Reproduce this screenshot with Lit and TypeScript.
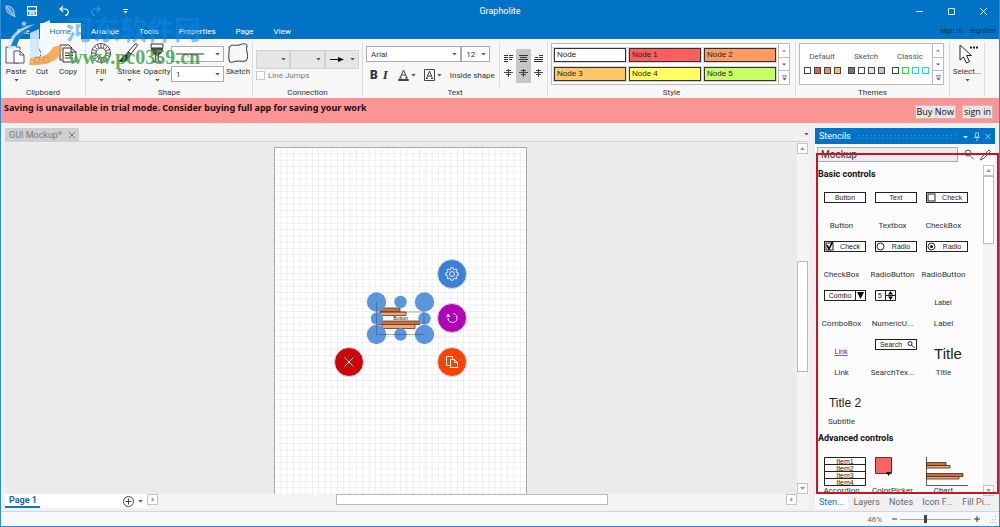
import { LitElement, html, svg, css, nothing, TemplateResult } from "lit";
import { customElement, property } from "lit/decorators.js";
import { styleMap } from "lit/directives/style-map.js";

const base = css`
  * { box-sizing: border-box; }
  button, select, input { font: inherit; color: inherit; margin: 0; padding: 0; border-radius: 0; }
  button { background: none; border: 0; display: block; }
  select { appearance: none; background: none; border: 1px solid #ababab; }
  svg { display: block; }
`;

const arrow = html`<svg width="5" height="3" viewBox="0 0 5 3"><path d="M0.3 0h4.4L2.5 2.6z" fill="#555" /></svg>`;

@customElement("gallery-steps")
class GallerySteps extends LitElement {
  static styles = [base, css`
    :host { display: flex; flex-direction: column; width: 11px; border-left: 1px solid #bbb; }
    button { flex: 1; display: flex; align-items: center; justify-content: center; border-bottom: 1px solid #bbb; }
    button:last-child { border-bottom: 0; }
  `];
  render() {
    return html`
      <button aria-label="Scroll up"><svg width="4" height="3" viewBox="0 0 4 3"><path d="M0 2.5h4L2 .5z" fill="#888" /></svg></button>
      <button aria-label="Scroll down"><svg width="4" height="3" viewBox="0 0 4 3"><path d="M0 .5h4L2 2.5z" fill="#555" /></svg></button>
      <button aria-label="Show all"><svg width="5" height="6" viewBox="0 0 5 6"><path d="M0 .5h5M0 2h5" stroke="#777" stroke-width=".7" /><path d="M.5 3.2h4l-2 2.3z" fill="#555" /></svg></button>
    `;
  }
}

@customElement("combo-field")
class ComboField extends LitElement {
  @property() label = "";
  @property() value = "";
  static styles = [base, css`
    :host { display: grid; font-size: 8px; height: 16px; align-items: center; }
    select, svg { grid-area: 1 / 1; }
    select { width: 100%; height: 100%; padding-left: 4px; background: var(--field, #fff); border-color: var(--edge, #ababab); }
    svg { justify-self: end; margin-right: 4px; pointer-events: none; z-index: 1; }
    slot { display: contents; }
    ::slotted(svg) { grid-area: 1 / 1; pointer-events: none; z-index: 1; margin-left: 5px; }
  `];
  render() {
    return html`<select aria-label=${this.label}><option>${this.value}</option></select><slot></slot>${arrow}`;
  }
}

const big = (name: string, pic: TemplateResult, drop: boolean) => html`
  <button class="big"><svg width="22" height="22" viewBox="0 0 22 22" fill="none" stroke="#333" stroke-width="1">${pic}</svg>
    <span>${name}</span>${drop ? arrow : nothing}</button>`;

const pastePic = svg`<path d="M6 4H1v16h13v-3M6 4V2h5v2h4v3" stroke="#555"/><path d="M9 8h6l4 4v8H9z" fill="#fff" stroke="#555"/><path d="M15 8v4h4" stroke="#555"/>`;
const cutPic = svg`<path d="M5 1l8 14M16 1L8 15" stroke="#666"/><circle cx="6" cy="17" r="3" stroke="#666"/><circle cx="15" cy="17" r="3" stroke="#666"/>`;
const copyPic = svg`<path d="M5 17H3V2h9l3 3"/><path d="M6 5h8l5 4v10H6z" fill="#fff"/><path d="M14 5v4h5M8 10h8M8 12.5h8M8 15h8"/>`;
const fillPic = svg`<g stroke-width=".8"><circle cx="11" cy="10" r="9.500"/><circle cx="11" cy="10" r="5"/><path d="M11 .5v4.500M11 15v4.500M1.500 10H6M16 10h4.500M4.300 3.300l3.200 3.200M14.500 13.500l3.200 3.200M17.700 3.300l-3.200 3.200M7.500 13.500l-3.200 3.200"/><path d="M7.400 1.200l1.700 4.100M14.600 1.200l-1.700 4.100M2.200 6.400l4.200 1.700M19.800 6.400l-4.200 1.700M2.200 13.600l4.200-1.700M19.800 13.600l-4.200-1.700M7.400 18.800l1.700-4.100M14.600 18.800l-1.700-4.100"/></g>`;
const strokePic = svg`<path d="M10 9l7-8c2-1 3 1 2 2l-6 8z"/><path d="M10 9l3 2-2 3-3-2z" fill="#777"/><path d="M8 12c-4 0-3 4-7 6 5 2 9 0 10-4z" fill="#333"/>`;
const opacityPic = svg`<path d="M5 1h12c0 3-.5 5-1 7-1 3-3 4-5 4s-4-1-5-4C5.500 6 5 4 5 1z"/><path d="M6 5h10c0 4-2 6-5 6S6 9 6 5z" fill="#555"/><path d="M9.500 12l.5 5-3 2h8l-3-2 .5-5"/>`;
const sketchPic = svg`<path d="M2 4C5 1 8 3 12 2c3-1 6-2 8 0 0 3-1 4 0 7 1 4 1 6-1 9-5 1-9-1-13 1-3 1-4 0-4-3C1 11 3 8 2 4z"/>`;

@customElement("ribbon-bar")
class RibbonBar extends LitElement {
  static styles = [base, css`
    :host { display: grid; height: 59px; background: #f7f7f7; font-size: 8px; color: #333; padding-top: 3px;
      grid-template-columns: minmax(0, 85fr) minmax(0, 167fr) minmax(0, 110fr) minmax(0, 185fr) minmax(0, 248fr) minmax(0, 154fr) minmax(0, 35fr) minmax(0, 14fr); }
    .group { display: flex; flex-direction: column; border-right: 1px solid #dcdcdc; margin-bottom: 2px; min-width: 0; }
    .last { border: 0; }
    .body { flex: 1; display: flex; min-height: 0; }
    .clip { padding-left: 2px; }
    .name { text-align: center; line-height: 12px; margin-bottom: -3px; }
    .big { display: flex; flex-direction: column; align-items: center; padding-top: 1px; width: 26px; }
    .big span { line-height: 10px; margin: 2px 0; white-space: nowrap; }
    .shape .big { width: 28px; }
    .shape { padding-left: 1px; }
    .select { justify-content: center; }
    .stack { display: flex; flex-direction: column; gap: 4px; padding-top: 4px; flex: 1; }
    .conn { padding: 8px 3px 0; flex: 1; }
    .trio { display: grid; grid-template-columns: repeat(3, 1fr); height: 19px; }
    .trio combo-field { height: 19px; --field: #e6e6e6; --edge: #d2d2d2; }
    label { display: flex; align-items: center; gap: 3px; color: #777; margin-top: 2px; }
    input[type="checkbox"] { appearance: none; width: 9px; height: 9px; border: 1px solid #c8c8c8; background: #fff; }
    .fonts { display: grid; grid-template-columns: 94fr 28fr; }
    .text { flex: 133 0 0; padding: 4px 9px 0 3px; min-width: 0; }
    .marks { display: flex; align-items: center; height: 20px; margin-top: 3px; padding-left: 4px; gap: 5px; white-space: nowrap; }
    .marks .b { font-weight: 900; font-size: 12px; width: 10px; }
    .marks .i { font: italic 700 13px "Liberation Serif", serif; width: 10px; }
    .marks .color { display: flex; align-items: center; gap: 2px; }
    .marks .color + .color { margin: 0 3px; }
    .sep { width: 1px; height: 15px; background: #dcdcdc; }
    .align { flex: 51 0 0; border-left: 1px solid #dcdcdc; display: grid; grid-template-columns: repeat(3, 15px); justify-content: center; padding: 7px 0 4px; }
    .align div { display: flex; flex-direction: column; justify-content: space-evenly; align-items: center; }
    .align .on { background: #c6c6c6; }
    .gallery { flex: 1; display: flex; border: 1px solid #bbb; background: #fff; height: 42px; margin: 1px 5px 0 3px; }
    .nodes { flex: 1; display: grid; grid-template-columns: repeat(3, 1fr); gap: 4px 3px; padding: 3px 2px 2px; }
    .node { border: 1px solid #333; outline: 1px solid rgba(120, 120, 120, .3); text-align: left; padding-left: 2px;
      font: 8px/12px "Liberation Sans", Arial, sans-serif; color: #222; height: 14px; align-self: center; }
    .themes { flex: 1; display: grid; grid-template-columns: repeat(3, 1fr); }
    .theme { display: flex; flex-direction: column; align-items: center; padding-top: 7px; gap: 4px; line-height: 12px; color: #555; }
    .theme div { display: flex; gap: 3px; }
    .theme i { width: 7px; height: 7px; border: 1px solid #444; }
  `];
  render() {
    const bars = (kind: number) => html`<button aria-label="Alignment"><svg width="9" height="8" viewBox="0 0 9 8" stroke="#333">
      ${kind === 0 ? svg`<path d="M0 .5h4M0 2.500h4M0 4.500h4M0 6.500h4M5 .5h4M5 2.500h4M5 4.500h3"/>`
        : kind === 1 ? svg`<path d="M0 .5h9M1 2.500h7M0 4.500h9M1 6.500h7"/>`
        : kind === 2 ? svg`<path d="M5 .5h4M5 2.500h4M0 4.500h9M0 6.500h9M1 2.500h3"/>`
        : svg`<path d="M0 3.500h9M2 1.500h5M2 5.500h5M4.500 0v8" stroke-width=".9"/>`}</svg></button>`;
    const nodes: [string, string][] = [["Node", "#fff"], ["Node 1", "#fb5e5e"], ["Node 2", "#ff9a62"], ["Node 3", "#ffc766"], ["Node 4", "#ffff62"], ["Node 5", "#c8ff62"]];
    const themes: [string, string[], string[]][] = [
      ["Default", ["#fff", "#f55", "#ff8a50", "#ffc055"], []],
      ["Sketch", ["#777", "#fff", "#e4e4e4", "#c8c8c8"], []],
      ["Classic", ["#fff", "#fff", "#fff", "#fff"], ["#444444", "#3fd24a", "#3fd6b4", "#35d5e0"]],
    ];
    return html`
      <div class="group"><div class="body clip">
        ${big("Paste", pastePic, true)}${big("Cut", cutPic, false)}${big("Copy", copyPic, false)}
      </div><div class="name">Clipboard</div></div>
      <div class="group"><div class="body shape">
        ${big("Fill", fillPic, true)}${big("Stroke", strokePic, true)}${big("Opacity", opacityPic, true)}
        <div class="stack">
          <combo-field label="Line style"><svg width="28" height="2"><path d="M0 1h28" stroke="#333" /></svg></combo-field>
          <combo-field label="Line width" value="1"></combo-field>
        </div>
        ${big("Sketch", sketchPic, false)}
      </div><div class="name">Shape</div></div>
      <div class="group"><div class="body"><div class="conn">
        <div class="trio"><combo-field label="Route"></combo-field><combo-field label="Start cap"></combo-field>
          <combo-field label="End cap"><svg width="14" height="5" viewBox="0 0 14 5"><path d="M0 2.500h9" stroke="#111" /><path d="M8 0l6 2.500L8 5z" fill="#111" /></svg></combo-field></div>
        <label><input type="checkbox" />Line Jumps</label>
      </div></div><div class="name">Connection</div></div>
      <div class="group"><div class="body">
        <div class="text">
          <div class="fonts"><combo-field label="Font" value="Arial"></combo-field><combo-field label="Size" value="12"></combo-field></div>
          <div class="marks"><button class="b">B</button><button class="i">I</button><span class="sep"></span>
            <button class="color" aria-label="Text colour"><svg width="11" height="12" viewBox="0 0 11 12" fill="none" stroke="#444"><path d="M2 9L5.500 1 9 9M3.200 6h4.600M1 9h3M7 9h3"/><path d="M.5 10.500h10v1H.5z"/></svg>${arrow}</button>
            <button class="color" aria-label="Background colour"><svg width="11" height="12" viewBox="0 0 11 12" fill="none" stroke="#444"><path d="M.5 .5h10v11H.5z"/><path d="M2.500 9.500L5.500 2l3 7.500M3.500 7h4M2 9.500h2M7 9.500h2"/></svg>${arrow}</button>
            <button>Inside shape</button></div>
        </div>
        <div class="align"><div>${bars(0)}${bars(3)}</div><div class="on">${bars(1)}${bars(3)}</div><div>${bars(2)}${bars(3)}</div></div>
      </div><div class="name">Text</div></div>
      <div class="group"><div class="body"><div class="gallery"><div class="nodes">
        ${nodes.map(([n, c]) => html`<button class="node" style=${styleMap({ background: c })}>${n}</button>`)}
      </div><gallery-steps></gallery-steps></div></div><div class="name">Style</div></div>
      <div class="group"><div class="body"><div class="gallery"><div class="themes">
        ${themes.map(([n, f, b]) => html`<button class="theme">${n}<div>${f.map((c, k) => html`<i style=${styleMap({ "background": c, "border-color": b[k] ?? "#444" })}></i>`)}</div></button>`)}
      </div><gallery-steps></gallery-steps></div></div><div class="name">Themes</div></div>
      <div class="group"><div class="body select">${big("Select...", svg`<path d="M4 2v15l3.500-3 3 6 3-1.500-3-6h5z" fill="#fff" stroke="#222"/><path d="M14 4.500h8" stroke="#222" stroke-width="2" stroke-dasharray="2 1"/>`, true)}</div></div>
      <div class="group last"></div>
    `;
  }
}

type Stencil = [string, TemplateResult];
const box = svg`<rect x=".5" y=".5" width="41" height="10" fill="#fff" stroke="#222"/>`;
const mid = (s: string, x = 21) => svg`<text x=${x} y="8" text-anchor="middle">${s}</text>`;
const basic: Stencil[] = [
  ["Button", svg`${box}${mid("Button")}`],
  ["Textbox", svg`${box}${mid("Text")}`],
  ["CheckBox", svg`${box}<rect x="2" y="2" width="7" height="7" fill="none" stroke="#222"/>${mid("Check", 26)}`],
  ["CheckBox", svg`${box}<rect x="2" y="2" width="7" height="7" fill="none" stroke="#222"/><path d="M3 4l2 4 4-8" fill="none" stroke="#000" stroke-width="1.600"/>${mid("Check", 26)}`],
  ["RadioButton", svg`${box}<circle cx="5.500" cy="5.500" r="3.500" fill="none" stroke="#222"/>${mid("Radio", 26)}`],
  ["RadioButton", svg`${box}<circle cx="5.500" cy="5.500" r="3.500" fill="none" stroke="#222"/><circle cx="5.500" cy="5.500" r="1.500" fill="#111"/>${mid("Radio", 26)}`],
  ["ComboBox", svg`${box}<path d="M31.500 0v11" stroke="#222"/><path d="M33 2h7l-3.500 7z" fill="#000"/>${mid("Combo", 16)}`],
  ["NumericU...", svg`<path d="M.5 .5h20v10H.5zM10.500 0v11M10.500 5.500h10" fill="#fff" stroke="#222"/><path d="M13 4.500h5l-2.500-3.500zM13 6.500h5l-2.500 3.500z" fill="#000"/>${mid("5", 5)}`],
  ["Label", svg`<text x="17" y="15" text-anchor="middle">Label</text>`],
  ["Link", svg`<text x="17" y="15" text-anchor="middle" fill="#22c" text-decoration="underline">Link</text>`],
  ["SearchTex...", svg`${box}${mid("Search", 16)}<circle cx="35" cy="4.500" r="2" fill="none" stroke="#222"/><path d="M36.500 6l3 3" stroke="#222"/>`],
  ["Title", svg`<text x="22" y="20" text-anchor="middle" class="title">Title</text>`],
  ["Subtitle", svg`<text x="21" y="19" text-anchor="middle" class="sub">Title 2</text>`],
];
const chart = svg`<path d="M0 5.500h20v3H0zM0 16.500h37v3H0z" fill="#c4714a" stroke="#4a2a1a" stroke-width=".8"/><path d="M0 8.500h24v2.500H0zM0 19.500h33v2.500H0z" fill="#f9a070" stroke="#4a2a1a" stroke-width=".8"/><path d="M.5 0v28.500H42" fill="none" stroke="#333" stroke-width=".8"/>`;
const advanced: Stencil[] = [
  ["Accordion", svg`<path d="M.5 .5h41v28H.5zM.5 7.500h41M.5 14.500h41M.5 21.500h41" fill="#fff" stroke="#222"/>${[1, 2, 3, 4].map((n) => svg`<text x="21" y=${n * 7} text-anchor="middle">Item${n}</text>`)}`],
  ["ColorPicker", svg`<path d="M.5 .5h16v16H.5z" fill="#fb6262" stroke="#533"/><path d="M11 15h5l-2.500 4z" fill="#000"/>`],
  ["Chart", chart],
];

@customElement("stencil-panel")
class StencilPanel extends LitElement {
  static styles = [base, css`
    :host { display: flex; flex-direction: column; background: #fcfcfc; font-size: 8px; color: #333; min-height: 0; }
    .head { display: flex; align-items: center; gap: 6px; height: 16px; background: #0173c7; color: #fff; padding: 0 4px; font-size: 9px; flex: none; }
    .dots { flex: 1; height: 5px; background: radial-gradient(circle, #2f8bd4 1px, transparent 1px) 0 0 / 4px 3px; }
    .find { display: flex; align-items: center; height: 21px; padding: 0 4px 0 2px; gap: 6px; flex: none; }
    .find select { flex: 1; height: 15px; background: #ededed; font-size: 10px; line-height: 13px; padding-left: 3px; }
    .main { flex: 1; display: flex; min-height: 0; }
    .list { flex: 1; overflow: hidden; padding-left: 1px; }
    h2 { margin: 0; font-size: 9px; line-height: 18px; color: #111; padding-left: 2px; font-weight: 700; }
    .grid { display: grid; grid-template-columns: repeat(3, 51px); grid-auto-rows: 49px; }
    .grid + h2 { line-height: 20px; }
    .item { display: flex; flex-direction: column; padding-top: 9px; line-height: 10px; }
    .item > svg { margin-left: 8px; }
    .item text { font: 7px "Liberation Sans", Arial, sans-serif; }
    .item .title { font-size: 15px; }
    .item .sub { font-size: 12px; }
    .tabs { display: flex; height: 13px; background: #f0f0f0; align-items: center; justify-content: space-between; font-size: 9px; flex: none; color: #666; }
    .tabs button { line-height: 13px; padding: 0 4px; white-space: nowrap; }
    .tabs .on { background: #fcfcfc; color: #0173c7; }
  `];
  render() {
    const cell = ([name, pic]: Stencil) => html`<button class="item"><svg width="42" height="29" viewBox="0 0 42 29" fill="#222">${pic}</svg><span>${name}</span></button>`;
    return html`
      <div class="head"><span>Stencils</span><span class="dots"></span>
        <svg width="28" height="9" viewBox="0 0 28 9" fill="none" stroke="#9cc8ec"><path d="M0 4h5L2.500 6.500z" fill="#d5e9f8" stroke="none"/><path d="M12.500 1h3v4h-3zM11 5.500h6M14 5.500V9"/><path d="M22.500 2l5 5M27.500 2l-5 5"/></svg></div>
      <div class="find"><select aria-label="Stencil set"><option>Mockup</option></select>
        <button aria-label="Search"><svg width="10" height="12" viewBox="0 0 10 12" fill="none" stroke="#555"><circle cx="4" cy="4" r="3"/><path d="M6 6.500l4 4"/></svg></button>
        <button aria-label="Edit"><svg width="11" height="12" viewBox="0 0 11 12" fill="none" stroke="#555"><path d="M2 8l7-7 1.500 1.500-7 7L0 11z"/></svg></button></div>
      <div class="main"><div class="list">
        <h2>Basic controls</h2><div class="grid">${basic.map(cell)}</div>
        <h2>Advanced controls</h2><div class="grid">${advanced.map(cell)}</div>
      </div><scroll-strip lead="0" size="64" rest="234"></scroll-strip></div>
      <div class="tabs"><button class="on">Sten...</button><button>Layers</button><button>Notes</button><button>Icon F...</button><button>Fill Pi...</button></div>
    `;
  }
}

@customElement("scroll-strip")
class ScrollStrip extends LitElement {
  @property({ type: Number }) lead = 0;
  @property({ type: Number }) size = 1;
  @property({ type: Number }) rest = 1;
  @property({ type: Boolean, reflect: true }) flat = false;
  static styles = [base, css`
    :host { display: flex; flex-direction: column; width: 12px; background: #f4f4f4; padding-right: 1px; }
    :host([flat]) { flex-direction: row; width: auto; height: 13px; padding: 0 0 2px; }
    button { flex: none; width: 11px; height: 11px; background: #fff; border: 1px solid #c4c4c4; display: grid; place-items: center; }
    .thumb { background: #fff; border: 1px solid #b8b8b8; }
  `];
  render() {
    const tip = (d: string) => html`<svg width="5" height="5" viewBox="0 0 5 5"><path d=${d} fill="#999" /></svg>`;
    return html`<button aria-label="Back">${tip(this.flat ? "M3.500 0v5L1 2.500z" : "M0 4h5L2.500 1z")}</button>
      <span style=${styleMap({ flex: `${this.lead} 0 0` })}></span><span class="thumb" style=${styleMap({ flex: `${this.size} 0 0` })}></span><span style=${styleMap({ flex: `${this.rest} 0 0` })}></span>
      <button aria-label="Forward">${tip(this.flat ? "M1.500 0v5L4 2.500z" : "M0 1h5L2.500 4z")}</button>`;
  }
}

@customElement("drawing-board")
class DrawingBoard extends LitElement {
  static styles = [base, css`
    :host { display: flex; flex-direction: column; min-width: 0; font-size: 9px; }
    .tabs { display: flex; height: 19px; padding-top: 5px; align-items: center; justify-content: space-between; border-bottom: 1px solid #d0d0d0; flex: none; }
    .doc { display: flex; align-items: center; gap: 7px; height: 14px; background: #cfcfcf; color: #7c7c7c; padding: 0 4px; }
    .view { flex: 1; display: flex; min-height: 0; margin-top: 1px; }
    .canvas { flex: 1; background: #ebebeb; display: flex; justify-content: center; padding: 4px 2px 0 0; }
    .page { width: 253px; position: relative; background: #fff; border: 1px solid #a8a8a8; border-bottom: 0; overflow: hidden; }
    .chart { position: absolute; left: 90px; top: 142px; }
    .act { position: absolute; width: 30px; height: 30px; border-radius: 50%; border: 1px solid #c9d9ee; display: grid; place-items: center; }
    .gear { left: 162px; top: 111px; background: #3d7fd4; }
    .turn { left: 162px; top: 155px; background: #b100b8; }
    .dup { left: 162px; top: 199px; background: #ff4200; }
    .del { left: 59px; top: 199px; background: #cc0505; }
    .foot { display: flex; height: 15px; padding-right: 12px; align-items: flex-start; margin-bottom: 4px; background: #f4f4f4; }
    .pages { width: 142px; display: flex; height: 14px; background: #fff; align-items: center; gap: 4px; padding-right: 4px; }
    .pages .p { color: #0e6ab5; font-weight: 700; font-size: 9px; line-height: 12px; padding: 0 3px 0 4px; border-bottom: 2px solid #0e76c4; margin-right: auto; }
    .foot scroll-strip { flex: 1; }
  `];
  render() {
    return html`
      <div class="tabs"><button class="doc">GUI Mockup*<svg width="6" height="6" stroke="#777"><path d="M0 0l6 6M6 0L0 6" /></svg></button>${arrow}</div>
      <div class="view"><div class="canvas"><div class="page">
        <svg width="252" height="346"><defs><pattern id="g" width="6.300" height="6.300" patternUnits="userSpaceOnUse"><path d="M6 0v6.300M0 6h6.300" stroke="#e6e6e6" stroke-width=".8" /></pattern></defs><rect width="252" height="346" fill="url(#g)" /></svg>
        <svg class="chart" width="72" height="56" viewBox="365 290 72 56">
          <g stroke="#5d3520" stroke-width=".8"><path d="M380 308h20v4h-20zM378 321h42v3.500h-42z" fill="#c4714a"/><path d="M380 312h26v3.500h-26zM382 324.500h33v4h-33z" fill="#f9a070"/></g>
          <g fill="#5b96dd"><circle cx="376.500" cy="302" r="9.700"/><circle cx="424.500" cy="302" r="9.700"/><circle cx="376.500" cy="334.500" r="9.700"/><circle cx="424.500" cy="334.500" r="9.700"/><circle cx="400.500" cy="302" r="6.200"/><circle cx="377" cy="318.500" r="6.200"/><circle cx="424.500" cy="318.500" r="6.200"/><circle cx="400.500" cy="334.500" r="6.200"/></g>
          <path d="M376.500 302v32.500h48M377 312h47v12" fill="none" stroke="#345" stroke-opacity=".55" stroke-width=".8"/>
          <text x="400.500" y="320" text-anchor="middle" font-family="Liberation Sans, Arial, sans-serif" font-size="5" fill="#222">Button</text>
        </svg>
        <button class="act gear" aria-label="Settings"><svg width="14" height="14" viewBox="-7 -7 14 14" fill="none" stroke="#fff"><circle r="2.400" stroke-width=".9"/><path d="M-1.200-6.200h2.400L1.600-4.500 2.600-4.100 4.100-5 5-4.100 4.300-2.600 4.600-1.600 6.200-1.200v2.400L4.600 1.600 4.200 2.600 5 4.100 4.100 5 2.600 4.200 1.600 4.600 1.200 6.200h-2.400L-1.600 4.600-2.600 4.200-4.100 5-5 4.100-4.200 2.600-4.600 1.600-6.200 1.200v-2.400L-4.600-1.600-4.200-2.600-5-4.100-4.100-5-2.600-4.200-1.600-4.600z" stroke-width=".9"/></svg></button>
        <button class="act turn" aria-label="Rotate"><svg width="14" height="14" viewBox="0 0 14 14" fill="none" stroke="#fff"><path d="M8 2.500a4.500 4.500 0 1 1-5 4.500"/><path d="M1 6l2-3.500L5.500 6z" fill="#fff" stroke="none"/></svg></button>
        <button class="act dup" aria-label="Duplicate"><svg width="14" height="14" viewBox="0 0 14 14" fill="none" stroke="#fff"><path d="M4.500 10.500h-3v-9h6v2"/><path d="M5.500 4.500h4l3 3v5h-7zM9.500 4.500v3h3"/></svg></button>
        <button class="act del" aria-label="Delete"><svg width="10" height="10" stroke="#fff"><path d="M.5 .5l9 9M9.500 .5l-9 9"/></svg></button>
      </div></div><scroll-strip lead="107" size="108" rest="111"></scroll-strip></div>
      <div class="foot"><div class="pages"><button class="p">Page 1</button><button aria-label="Add page"><svg width="11" height="11" fill="none" stroke="#444"><circle cx="5.500" cy="5.500" r="5"/><path d="M5.500 2.500v6M2.500 5.500h6"/></svg></button>${arrow}</div>
        <scroll-strip flat lead="179" size="270" rest="179"></scroll-strip></div>
    `;
  }
}

@customElement("app-root")
class AppRoot extends LitElement {
  static styles = [base, css`
    :host { display: flex; flex-direction: column; height: 100vh; position: relative; overflow: hidden; background: #f0f0f0;
      border: solid #2f8dd0; border-width: 0 1px 1px; font-family: Roboto, "Open Sans", sans-serif; box-sizing: border-box; color: #222; }
    .top { background: #0173c7; color: #fff; flex: none; }
    .title { display: grid; grid-template-columns: 1fr auto 1fr; align-items: center; height: 22px; font-size: 9px; }
    .quick { display: flex; align-items: center; gap: 11px; padding-left: 4px; }
    .quick div { display: flex; align-items: center; gap: 22px; }
    .win { justify-self: end; padding-right: 3px; }
    .menu { display: flex; height: 17px; font-size: 8px; align-items: stretch; padding-left: 6px; }
    .menu button { padding: 1px 10px 0; }
    .menu .on { background: #fff; color: #0173c7; margin: 1px 0 0; padding-top: 0; }
    .acct { margin-left: auto; display: flex; gap: 6px; padding: 0 3px; align-items: center; }
    .acct a { color: #0b2f55; text-decoration: none; }
    ribbon-bar { flex: none; }
    .trial { flex: none; display: flex; justify-content: space-between; align-items: flex-end; height: 25px; background: #ff9494; padding: 0 6px 4px 3px; color: #111;
      font-family: "Open Sans", sans-serif; }
    .trial strong { font-size: 9px; font-weight: 700; font-family: "Noto Sans", "Open Sans", sans-serif; line-height: 12px; align-self: flex-start; margin-top: 4px; }
    .trial div { display: flex; gap: 6px; }
    .trial button { font-size: 9px; height: 14px; line-height: 12px; background: #e9e4e4; border: 1px solid #d0b8b8; padding: 0 1px; }
    .work { flex: 1; display: grid; grid-template-columns: 1fr 180px; gap: 6px; min-height: 0; padding: 0 4px; }
    stencil-panel { margin: 5px 0 4px; }
    .status { flex: none; height: 15px; border-top: 1px solid #d2d6de; background: #f8f8f8; display: flex; align-items: center; justify-content: flex-end; gap: 10px; padding-right: 2px; font-size: 8px; color: #666; }
    .zoom { display: flex; align-items: center; gap: 3px; }
    input[type="range"] { appearance: none; width: 71px; height: 10px; margin: 0; background: linear-gradient(#aaa, #aaa) center / 100% 1px no-repeat; }
    input[type="range"]::-webkit-slider-thumb { appearance: none; width: 3px; height: 8px; background: #444; }
    .frame { position: absolute; left: 815px; right: 0; top: 153px; bottom: 32px; border: 2px solid #d1111f; border-right-color: #b91c3c; pointer-events: none; }
    .mark { position: absolute; left: 5px; top: 4px; pointer-events: none; }
  `];
  render() {
    return html`
      <div class="top">
        <div class="title"><div class="quick">
          <svg width="11" height="13" viewBox="0 0 11 13" fill="#4a93d6" stroke="#b9d8f2"><path d="M1 1c5 0 8 2 8 7l1 4-3-2C3 9 1 6 1 1zM2 2l6 8"/></svg>
          <div><svg width="10" height="10" viewBox="0 0 10 10" fill="none" stroke="#fff"><path d="M.5 .5h9v9h-9zM1 5h8M3 9.500V7h4v2.500" stroke-width="1.300"/></svg>
          <svg width="10" height="10" viewBox="0 0 10 10" fill="none" stroke="#fff" stroke-width="1.200"><path d="M1 3h5a3 3 0 0 1 0 6.500M4 .3L1 3l3 2.700"/></svg>
          <svg width="10" height="10" viewBox="0 0 10 10" fill="none" stroke="#3f93d8" stroke-width="1.200"><path d="M9 3H4a3 3 0 0 0 0 6.500M6 .3L9 3 6 5.700"/></svg>
          <svg width="5" height="5" viewBox="0 0 5 5"><path d="M0 .5h5" stroke="#fff"/><path d="M.5 2h4L2.500 4.500z" fill="#fff"/></svg></div>
        </div><span>Grapholite</span>
        <svg class="win" width="83" height="9" viewBox="0 0 80 9" fill="none" stroke="#d9ebf8"><path d="M0 4.500h7M32.500 1.500h6v6h-6zM64 1l7 7M71 1l-7 7"/></svg></div>
        <nav class="menu"><button>File</button><button class="on">Home</button><button>Arrange</button><button>Tools</button><button>Properties</button><button>Page</button><button>View</button>
          <div class="acct"><a href="#signin">sign in</a><a href="#register">register</a></div></nav>
      </div>
      <ribbon-bar></ribbon-bar>
      <div class="trial"><strong>Saving is unavailable in trial mode. Consider buying full app for saving your work</strong><div><button>Buy Now</button><button>sign in</button></div></div>
      <div class="work"><drawing-board></drawing-board><stencil-panel></stencil-panel></div>
      <div class="status"><label for="zoom">46%</label>
        <div class="zoom"><svg width="5" height="6"><path d="M0 3h5" stroke="#333" /></svg><input id="zoom" type="range" min="0" max="100" value="36" /><svg width="6" height="6"><path d="M0 3h6M3 0v6" stroke="#333" /></svg></div>
        <svg width="7" height="7" fill="#bbb"><path d="M5 0h1v1H5zM2 3h1v1H2zM5 3h1v1H5zM0 6h1v1H0zM2 6h1v1H2zM5 6h1v1H5z" /></svg></div>
      <div class="frame"></div>
      <svg class="mark" width="205" height="70" viewBox="5 4 205 70">
        <path d="M23 20.500l.9 2.300h2.400l-1.900 1.500.7 2.300-2.100-1.300-2.100 1.300.7-2.300-1.900-1.500h2.400z" fill="#a8d0f0"/>
        <path d="M7 49C7 37 16 27 34 24 22 30 14 38 13 49z" fill="#cfe5f6" fill-opacity=".8"/>
        <path d="M10 46C13 36 20 29 33 26c-9 5-15 11-17 20z" fill="#1380d0"/>
        <path d="M29 33l9-4v25c-2 3-5 4-9 4z" fill="#cfe7f9" fill-opacity=".9"/>
        <path d="M40 24l9-4v34c-2 2-5 3-9 3z" fill="#f2f9ff" fill-opacity=".9"/>
        <path d="M61 45c1 13-10 21-33 20l1-7c12 0 19-3 23-11z" fill="#f5a04c" fill-opacity=".85"/>
        <text x="65" y="40" font-family="Noto Sans CJK SC, sans-serif" font-weight="700" font-size="27" fill="#1687e6" fill-opacity=".5">河东软件网</text>
        <text x="67" y="64" font-family="Liberation Serif, serif" font-weight="700" font-size="20" fill="#3fa548" fill-opacity=".85">www.pc0359.cn</text>
      </svg>
    `;
  }
}
